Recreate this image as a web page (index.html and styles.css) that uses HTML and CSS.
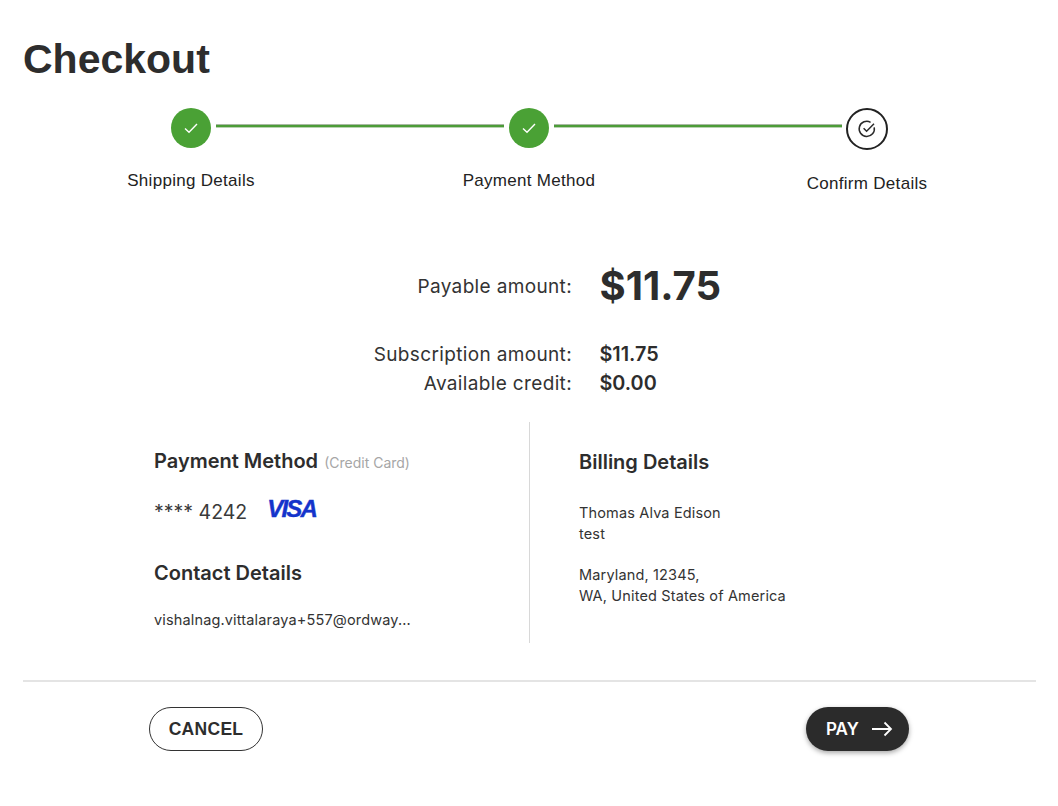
FILE: index.html
```html
<!DOCTYPE html>
<html lang="en">
<head>
<meta charset="utf-8">
<title>Checkout</title>
<link rel="stylesheet" href="styles.css">
</head>
<body>
<main class="page">
  <h1 class="title">Checkout</h1>
  <ol class="stepper">
    <li class="step">
      <span class="dot done"><svg class="tick" viewBox="0 0 16 16"><path d="M2 8.500l4 3.700L14 4"/></svg></span>
      <span class="line"></span>
      <span class="step-label">Shipping Details</span>
    </li>
    <li class="step">
      <span class="dot done"><svg class="tick" viewBox="0 0 16 16"><path d="M2 8.500l4 3.700L14 4"/></svg></span>
      <span class="line"></span>
      <span class="step-label">Payment Method</span>
    </li>
    <li class="step current">
      <span class="dot active"><svg class="tick-circle" viewBox="0 0 20 20"><path d="M17.200 8.300A7.600 7.600 0 1 1 13.600 3.300"/><path d="M6.600 9.200l3 3L17 4.800"/></svg></span>
      <span class="step-label">Confirm Details</span>
    </li>
  </ol>
  <section class="summary">
    <div class="label pay-label">Payable amount:</div><div class="pay-value">$11.75</div>
    <div class="label sub-label">Subscription amount:</div><div class="value sub-label">$11.75</div>
    <div class="label">Available credit:</div><div class="value">$0.00</div>
  </section>
  <section class="details">
    <div class="col-left">
      <h2 class="head">Payment Method <span class="muted">(Credit Card)</span></h2>
      <div class="card"><span>**** 4242</span><span class="visa">VISA</span></div>
      <h2 class="head contact">Contact Details</h2>
      <p class="small">vishalnag.vittalaraya+557@ordway...</p>
    </div>
    <div class="col-right">
      <h2 class="head">Billing Details</h2>
      <p class="small address">Thomas Alva Edison<br>test</p>
      <p class="small address second">Maryland, 12345,<br>WA, United States of America</p>
    </div>
  </section>
  <footer class="footer">
    <button class="btn cancel">CANCEL</button>
    <button class="btn pay">PAY<svg class="arrow" viewBox="0 0 22 16"><path d="M1 8h19M13.500 1.500L20 8l-6.500 6.500"/></svg></button>
  </footer>
</main>
</body>
</html>
```
FILE: styles.css
```css
* { box-sizing: border-box; }
html, body { margin: 0; background: #fff; }
body { font-family: "Inter", "Liberation Sans", sans-serif; color: #2d2d2d; }
.page { width: 1058px; height: 806px; padding: 36px 22px 0 23px; overflow: hidden; }
.title { margin: 0; font: bold 41px/46px "Liberation Sans", sans-serif; color: #2d2d2d; }
.stepper { list-style: none; margin: 26px 0 0 -1px; padding: 0; display: grid; grid-template-columns: repeat(3, 338px); height: 85px; }
.step { position: relative; display: flex; flex-direction: column; align-items: center; }
.dot { width: 40px; height: 40px; border-radius: 50%; display: flex; align-items: center; justify-content: center; }
.done { background: #4aa135; }
.active { width: 42px; height: 42px; border: 2.500px solid #222; background: #fff; }
.tick { width: 16px; height: 16px; fill: none; stroke: #fff; stroke-width: 1.400; }
.tick-circle { width: 20px; height: 20px; fill: none; stroke: #2a2a2a; stroke-width: 1.500; }
.line { position: absolute; top: 16px; left: 194px; width: 288px; height: 4px; background: linear-gradient(#a9b9a4 0 1px, #4c9c38 1px 3px, #b9d2b2 3px); }
.step-label { margin-top: 23px; font: 17px/20px "Liberation Sans", sans-serif; letter-spacing: .3px; color: #222; }
.current .step-label { margin-top: 24px; }
.summary { display: grid; grid-template-columns: 549px 1fr; column-gap: 27.500px; margin-top: 68px; align-items: center; font-size: 19px; line-height: 29px; letter-spacing: .35px; }
.label { text-align: right; color: #333; font-weight: 400; }
.pay-value { font-size: 40px; line-height: 50px; font-weight: 700; letter-spacing: 0; color: #2d2d2d; }
.sub-label { margin-top: 29px; }
.value { font-size: 19.800px; letter-spacing: 0; font-weight: 600; color: #2d2d2d; }
.details { display: grid; grid-template-columns: 507px 1fr; margin-top: 24px; height: 221px; }
.col-left { border-right: 1px solid #d8d8d8; padding: 27px 0 0 131px; }
.col-right { padding: 28px 0 0 49px; }
.head { margin: 0; font-size: 20px; line-height: 24px; font-weight: 600; color: #2d2d2d; white-space: nowrap; }
.muted { margin-left: 1px; font-size: 14px; font-weight: 400; color: #a6a6a6; }
.card { display: flex; align-items: center; gap: 20px; margin-top: 21px; font-size: 19.500px; line-height: 30px; color: #3a3a3a; }
.visa { margin-bottom: 5px; font: italic bold 24px/26px "Liberation Sans", sans-serif; color: #1434cb; letter-spacing: -1.800px; -webkit-text-stroke: .4px #1434cb; }
.contact { margin-top: 34px; }
.small { margin: 0; font-size: 14.500px; line-height: 21px; letter-spacing: .15px; color: #333; }
.col-left .small { margin-top: 24px; white-space: nowrap; }
.address { margin-top: 28px; }
.address.second { margin-top: 20px; }
.footer { display: flex; justify-content: space-between; align-items: flex-start; border-top: 2px solid #e4e4e4; margin-top: 37px; padding: 25px 127px 0 126px; }
.btn { height: 44px; border-radius: 22px; font-weight: 700; cursor: pointer; }
.cancel { width: 114px; background: #fff; border: 1.500px solid #333; color: #2d2d2d; font: bold 17.500px "Liberation Sans", sans-serif; letter-spacing: .3px; }
.pay { width: 103px; display: flex; align-items: center; gap: 12px; padding: 0 0 0 20px; border: 0; background: #2b2b2b; color: #fff; font-family: "Inter", sans-serif; font-size: 17px; font-weight: 600; box-shadow: 0 2px 5px rgba(0,0,0,.35); }
.arrow { width: 22px; height: 16px; fill: none; stroke: #fff; stroke-width: 1.800; }
```
